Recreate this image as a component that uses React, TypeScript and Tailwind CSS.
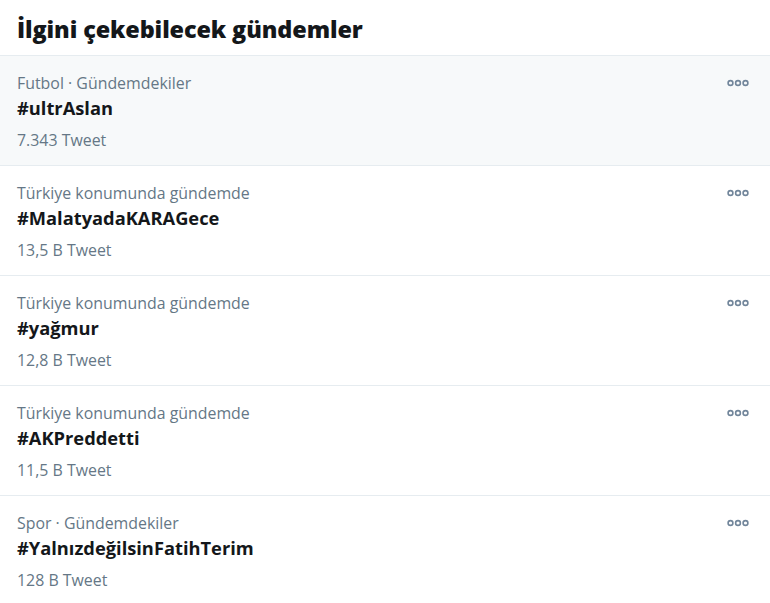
import React from 'react';

type Trend = {
  context: string;
  tag: string;
  count: string;
};

const trends: Trend[] = [
  { context: 'Futbol · Gündemdekiler', tag: '#ultrAslan', count: '7.343 Tweet' },
  { context: 'Türkiye konumunda gündemde', tag: '#MalatyadaKARAGece', count: '13,5 B Tweet' },
  { context: 'Türkiye konumunda gündemde', tag: '#yağmur', count: '12,8 B Tweet' },
  { context: 'Türkiye konumunda gündemde', tag: '#AKPreddetti', count: '11,5 B Tweet' },
  { context: 'Spor · Gündemdekiler', tag: '#YalnızdeğilsinFatihTerim', count: '128 B Tweet' },
];

function MoreIcon() {
  return (
    <svg width="22" height="8" viewBox="0 0 22 8" className="text-[#71859a]">
      <circle cx="3.5" cy="4" r="2.4" fill="none" stroke="currentColor" strokeWidth="1.6" />
      <circle cx="11" cy="4" r="2.4" fill="none" stroke="currentColor" strokeWidth="1.6" />
      <circle cx="18.5" cy="4" r="2.4" fill="none" stroke="currentColor" strokeWidth="1.6" />
    </svg>
  );
}

export default function App() {
  return (
    <div className="w-[770px] h-[603px] bg-white font-['Open_Sans',sans-serif] overflow-hidden">
      <div className="h-[56px] flex items-center pt-[4px] px-[17px] border-b border-[#e6ecf0]">
        <h2 className="text-[23.4px] font-extrabold text-[#14171a] tracking-[-0.1px]">İlgini çekebilecek gündemler</h2>
      </div>

      {trends.map((t, i) => (
        <div
          key={t.tag}
          className={`h-[110px] flex justify-between pl-[17px] pr-[21px] pt-[15px] border-b border-[#e6ecf0] ${i === 0 ? 'bg-[#f7f9fa]' : 'bg-white'}`}
        >
          <div className="flex flex-col">
            <span className="text-[15.9px] leading-[24px] text-[#657786]">{t.context}</span>
            <span className="text-[18.3px] leading-[26px] font-bold text-[#14171a]">{t.tag}</span>
            <span className="text-[15.9px] leading-[20px] mt-[9px] text-[#657786]">{t.count}</span>
          </div>
          <div className="pt-[8px]">
            <MoreIcon />
          </div>
        </div>
      ))}
    </div>
  );
}
